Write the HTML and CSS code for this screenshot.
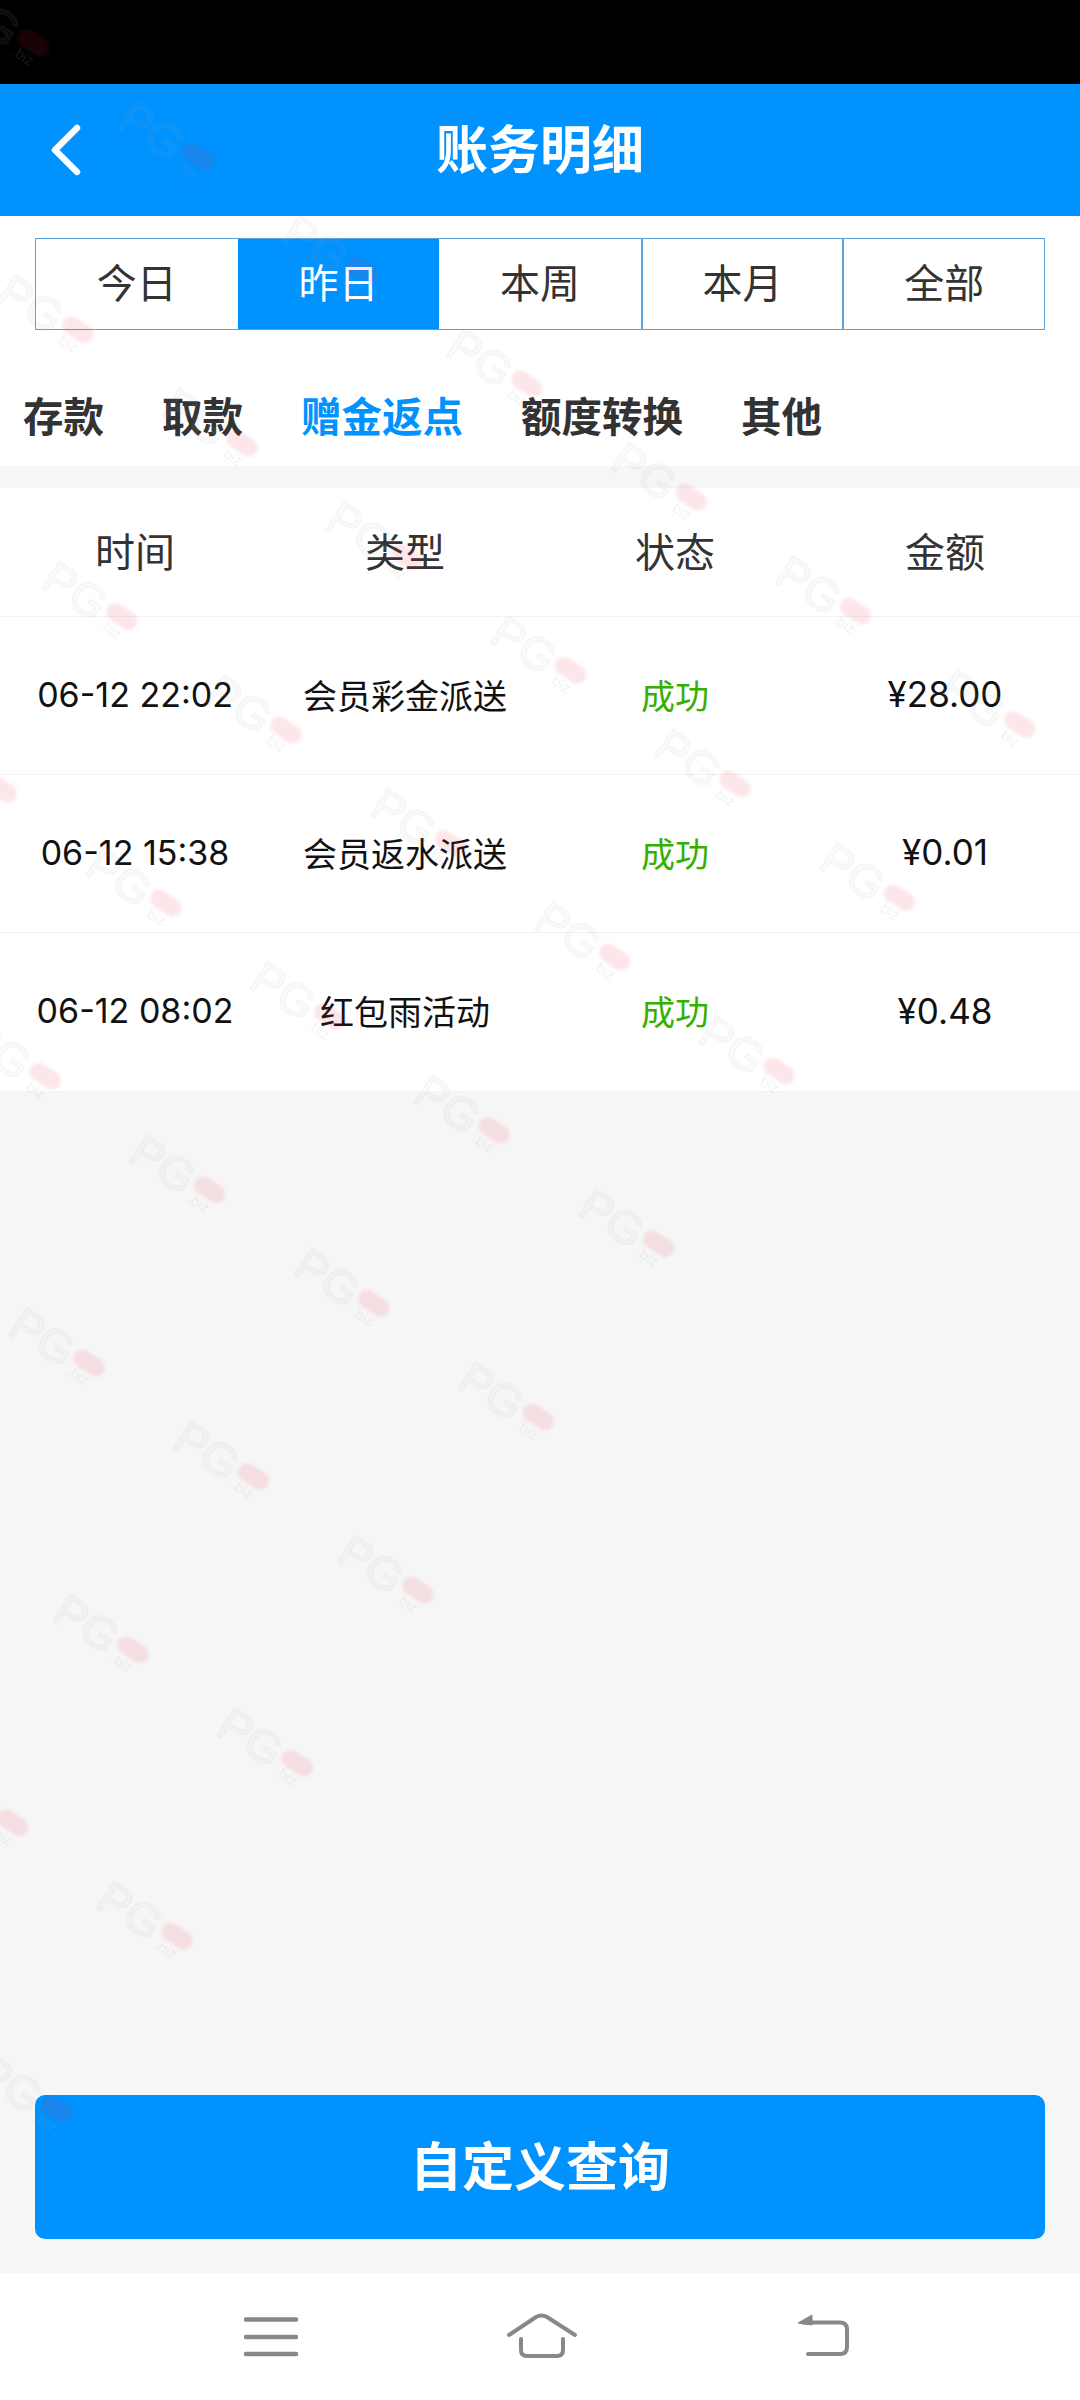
FILE: index.html
```html
<!DOCTYPE html>
<html lang="zh">

<head>
    <meta charset="UTF-8">
    <meta name="viewport" content="width=device-width, initial-scale=1.0">
    <title>账务明细</title>
    <link rel="stylesheet" href="styles.css">
</head>

<body>
    <div class="status-bar"></div>

    <div class="header">
        <svg class="back-icon" viewBox="0 0 40 56" width="40" height="56">
            <path d="M31 6 L9 28 L31 50" fill="none" stroke="#fff" stroke-width="6.5" stroke-linecap="round" stroke-linejoin="round" />
        </svg>
        <h1>账务明细</h1>
    </div>

    <div class="filters">
        <div class="tabs">
            <div class="tab">今日</div>
            <div class="tab active">昨日</div>
            <div class="tab">本周</div>
            <div class="tab">本月</div>
            <div class="tab">全部</div>
        </div>
        <div class="categories">
            <span class="category">存款</span>
            <span class="category">取款</span>
            <span class="category active">赠金返点</span>
            <span class="category">额度转换</span>
            <span class="category">其他</span>
        </div>
    </div>

    <div class="table">
        <div class="row head">
            <div>时间</div>
            <div>类型</div>
            <div>状态</div>
            <div>金额</div>
        </div>
        <div class="row">
            <div>06-12 22:02</div>
            <div>会员彩金派送</div>
            <div class="success">成功</div>
            <div class="amount">¥28.00</div>
        </div>
        <div class="row">
            <div>06-12 15:38</div>
            <div>会员返水派送</div>
            <div class="success">成功</div>
            <div class="amount">¥0.01</div>
        </div>
        <div class="row">
            <div>06-12 08:02</div>
            <div>红包雨活动</div>
            <div class="success">成功</div>
            <div class="amount">¥0.48</div>
        </div>
    </div>

    <div class="content">
        <button class="query-button">自定义查询</button>
    </div>

    <div class="nav">
        <svg class="nav-menu" viewBox="0 0 54 48" width="54" height="48">
            <path d="M2 6.5 H52 M2 24 H52 M2 41 H52" fill="none" stroke="#888" stroke-width="4.5" stroke-linecap="round" />
        </svg>
        <svg class="nav-home" viewBox="0 0 72 48" width="72" height="48">
            <path d="M3 22 L30 4 Q35.5 1 41 4 L69 22" fill="none" stroke="#888" stroke-width="4" stroke-linecap="round" />
            <path d="M15 26 V37 Q15 43 21 43 H51 Q57 43 57 37 V26" fill="none" stroke="#888" stroke-width="4" stroke-linecap="round" />
        </svg>
        <svg class="nav-back" viewBox="0 0 56 48" width="56" height="48">
            <path d="M3 10 L17 2 V12 Z" fill="#888" stroke="#888" stroke-width="1" stroke-linejoin="round" />
            <path d="M8 9.5 H45 Q52 9.5 52 16.5 V34 Q52 41 45 41 H13" fill="none" stroke="#888" stroke-width="4" stroke-linecap="round" />
        </svg>
    </div>

    <!-- 水印层 -->
    <svg class="watermarks" id="watermarks" width="1080" height="2400">
        <defs>
            <g id="wm">
                <text class="wm-text" x="-86" y="20">PG</text>
                <rect class="wm-pill" x="-17" y="-9" width="34" height="18" rx="9" />
                <text class="wm-small" x="-14" y="22">.biz</text>
            </g>
        </defs>
    </svg>

    <script src="script.js"></script>
</body>

</html>
```

FILE: styles.css
```css
* {
    box-sizing: border-box;
}

body {
    position: relative;
    width: 1080px;
    height: 2400px;
    margin: 0;
    overflow: hidden;
    display: flex;
    flex-direction: column;
    background-color: #f6f6f6;
    color: #333;
    font-family: Inter, "Noto Sans CJK SC", sans-serif;
}

.status-bar {
    height: 84px;
    background-color: #000;
}

.header {
    height: 132px;
    padding-bottom: 8px;
    background-color: #0092ff;
    display: flex;
    align-items: center;
    justify-content: center;
    position: relative;
}

.header h1 {
    margin: 0;
    color: #fff;
    font-size: 52px;
    font-weight: bold;
}

.back-icon {
    position: absolute;
    left: 46px;
    top: 38px;
}

.filters {
    background-color: #fff;
    padding-top: 22px;
    margin-bottom: 22px;
}

.tabs {
    display: grid;
    grid-template-columns: repeat(5, 1fr);
    height: 92px;
    margin: 0 35px;
    border: 1px solid #5aa3dc;
}

.tab {
    display: flex;
    align-items: center;
    justify-content: center;
    padding-bottom: 7px;
    font-size: 40px;
    border-left: 2px solid #5aa3dc;
}

.tab:first-child {
    border-left: none;
}

.tab.active {
    background-color: #0092ff;
    border-left: none;
    color: #fff;
}

.tab.active + .tab {
    border-left: none;
}

.categories {
    height: 136px;
    padding: 33px 0 0 23px;
    display: flex;
    align-items: center;
    gap: 58px;
}

.category {
    font-size: 40.5px;
    font-weight: bold;
    color: #333;
}

.category.active {
    color: #0092ff;
}

.table {
    background-color: #fff;
}

.row {
    display: grid;
    grid-template-columns: repeat(4, 1fr);
    height: 158px;
    padding-bottom: 3px;
    align-items: center;
    text-align: center;
    font-size: 34px;
    color: #111;
    border-bottom: 1px solid #f2f2f2;
}

.row:last-child {
    border-bottom: none;
}

.row.head {
    height: 129px;
    padding-bottom: 5px;
    font-size: 40px;
    color: #333;
}

.amount {
    font-size: 35px;
}

.success {
    color: #35b000;
}

.content {
    flex: 1;
    display: flex;
    align-items: flex-end;
    padding: 0 35px 34px;
}

.query-button {
    width: 100%;
    height: 144px;
    padding-bottom: 8px;
    border: none;
    border-radius: 10px;
    background-color: #0092ff;
    color: #fff;
    font-family: inherit;
    font-size: 52px;
    font-weight: bold;
}

.nav {
    height: 127px;
    background-color: #fff;
    display: flex;
    align-items: center;
    padding-left: 244px;
}

.nav-home {
    margin-left: 208px;
}

.nav-back {
    margin-left: 217px;
}

.watermarks {
    position: absolute;
    top: 0;
    left: 0;
    pointer-events: none;
}

.wm-text {
    font-family: "Liberation Sans", sans-serif;
    font-size: 46px;
    fill: rgba(170, 170, 170, 0.04);
    stroke: rgba(170, 170, 170, 0.09);
    stroke-width: 2px;
    filter: blur(0.6px);
}

.wm-pill {
    fill: rgba(235, 30, 60, 0.11);
    filter: blur(1.5px);
}

.wm-small {
    font-family: "Liberation Sans", sans-serif;
    font-size: 15px;
    fill: rgba(170, 170, 170, 0.16);
}
```

FILE: script.js
```js
// 水印按斜向网格平铺，只铺左下这一片
const svg = document.getElementById('watermarks');
const ns = 'http://www.w3.org/2000/svg';

for (let m = 0; m < 10; m++) {
    for (let n = 0; n - m <= 6; n++) {
        const x = 34 + n * 164.3 - m * 284.7;
        const y = 43 + n * 113.6 + m * 59.5;
        if (x < -40 || x > 1180 || y > 2460) continue;

        const use = document.createElementNS(ns, 'use');
        use.setAttribute('href', '#wm');
        use.setAttribute('transform', `translate(${x} ${y}) rotate(33)`);
        svg.appendChild(use);
    }
}
```
